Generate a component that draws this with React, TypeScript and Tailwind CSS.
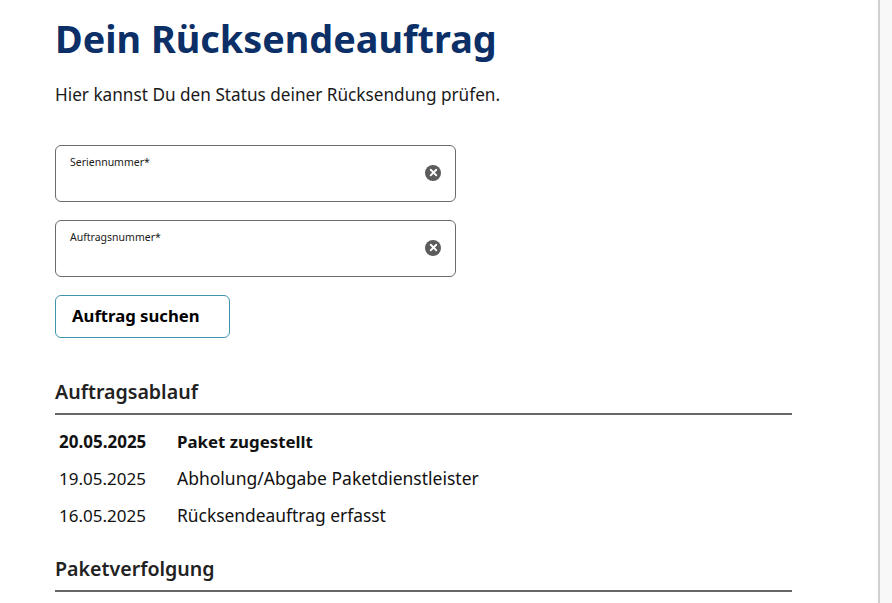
import { X } from "lucide-react";

function Field({ label }: { label: string }) {
  return (
    <div className="flex h-[57px] w-[401px] items-center justify-between rounded-[6px] border border-[#6b6b6b] pl-[14px] pr-[14px]">
      <span className="mb-[23px] text-[10.5px] leading-[14px] text-[#1a1a1a]">{label}</span>
      <span className="mb-[2px] flex h-[16px] w-[16px] items-center justify-center rounded-full bg-[#5c5c5c]">
        <X className="h-[11px] w-[11px] text-white" strokeWidth={4} />
      </span>
    </div>
  );
}

function SectionHead({ title }: { title: string }) {
  return (
    <div className="w-[737px] border-b-2 border-[#666666] pb-[8px]">
      <h2 className="text-[19.6px] font-semibold leading-[27px] text-[#222222]">{title}</h2>
    </div>
  );
}

export default function App() {
  return (
    <div className="flex h-[603px] w-full overflow-hidden bg-white font-['Noto_Sans',sans-serif]">
      <main className="flex-1 pl-[55px] pt-[12px]">
        <h1 className="text-[37.8px] font-bold leading-[54px] text-[#0b2f66]">Dein Rücksendeauftrag</h1>

        <p className="mt-[17px] text-[17.2px] leading-[24px] text-[#1a1a1a]">
          Hier kannst Du den Status deiner Rücksendung prüfen.
        </p>

        <div className="mt-[38px] flex flex-col gap-[18px]">
          <Field label="Seriennummer*" />
          <Field label="Auftragsnummer*" />
        </div>

        <button className="mt-[18px] flex h-[43px] w-[175px] items-center rounded-[6px] border border-[#3f93ad] pb-[1px] pl-[16px] text-[16.7px] font-bold text-black">
          Auftrag suchen
        </button>

        <div className="mt-[40px]">
          <SectionHead title="Auftragsablauf" />
        </div>

        <div className="mt-[14.75px] flex flex-col gap-[12.5px] pl-[4px] text-[17.5px] leading-[24px] text-[#111111]">
          <div className="flex h-[24px] items-baseline">
            <span className="w-[118px] text-[17px] font-bold">20.05.2025</span>
            <span className="text-[16.85px] font-bold">Paket zugestellt</span>
          </div>
          <div className="flex h-[24px] items-baseline">
            <span className="w-[118px] text-[17px]">19.05.2025</span>
            <span>Abholung/Abgabe Paketdienstleister</span>
          </div>
          <div className="flex h-[24px] items-baseline">
            <span className="w-[118px] text-[17px]">16.05.2025</span>
            <span className="text-[17.4px]">Rücksendeauftrag erfasst</span>
          </div>
        </div>

        <div className="mt-[28.25px]">
          <SectionHead title="Paketverfolgung" />
        </div>
      </main>
      <div className="w-[14px] shrink-0 border-l-2 border-[#d0d0d0] bg-[#f8f8f8]" />
    </div>
  );
}
